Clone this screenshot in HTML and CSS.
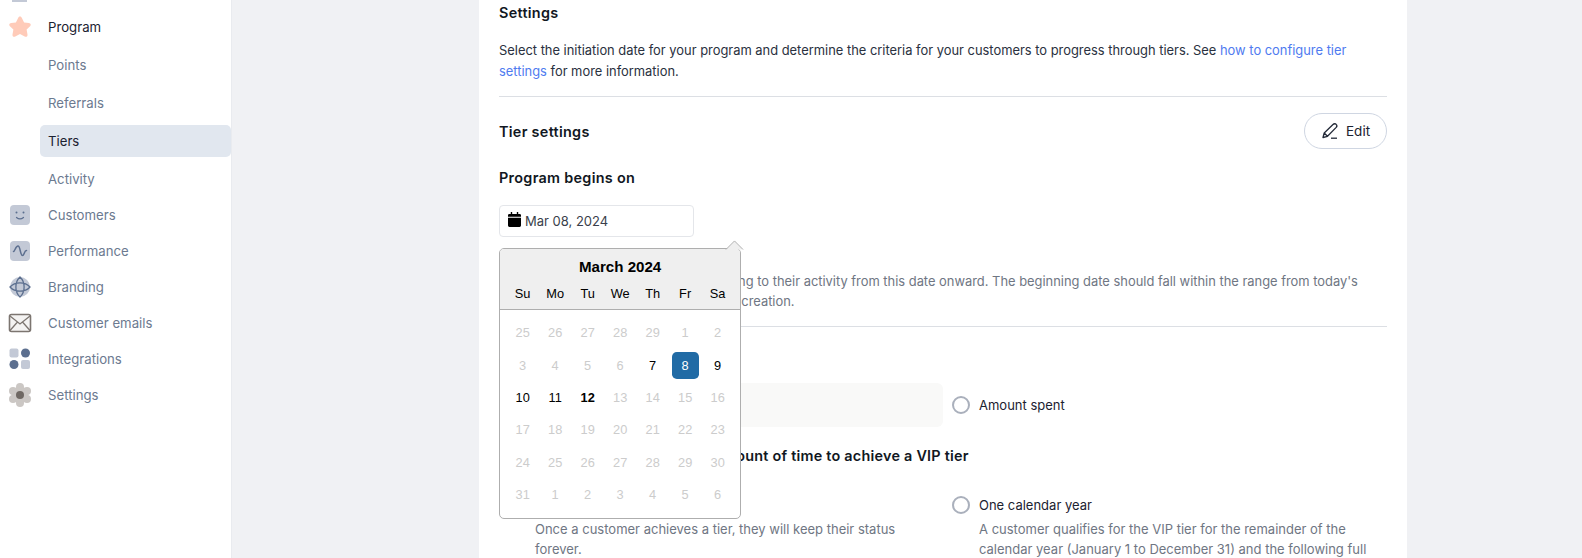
FILE: index.html
```html
<!DOCTYPE html>
<html lang="en">
<head>
<meta charset="utf-8">
<title>Tiers settings</title>
<link rel="stylesheet" href="styles.css">
</head>
<body>
<div class="app">
  <aside class="sidebar">
    <div class="top-sliver"></div>
    <nav class="nav">
      <a class="item main dark"><svg class="ico" viewBox="0 0 24 24"><path d="M12 1.500c1 0 1.500.7 2 1.700l2.100 4.200 4.800.7c2 .3 2.400 1.900 1.200 3.100l-3.500 3.400.9 4.900c.3 1.900-1.200 2.800-2.800 2l-4.700-2.400-4.700 2.400c-1.600.8-3.100-.1-2.800-2l.9-4.900-3.500-3.400C.7 10 1.100 8.400 3.100 8.100l4.800-.7L10 3.200c.5-1 1-1.700 2-1.700z" fill="#ffcbb9"/></svg><span>Program</span></a>
      <a class="item sub">Points</a>
      <a class="item sub">Referrals</a>
      <a class="item sub active">Tiers</a>
      <a class="item sub">Activity</a>
      <a class="item main"><svg class="ico" viewBox="0 0 24 24"><rect x="2" y="2" width="20" height="20" rx="4" fill="#c3c9d6"/><circle cx="8.500" cy="9.500" r="1" fill="#5c6f8f"/><circle cx="15.500" cy="9.500" r="1" fill="#5c6f8f"/><path d="M8.500 14.500c2 1.700 5 1.700 7 0" fill="none" stroke="#5c6f8f" stroke-width="1.200" stroke-linecap="round"/></svg><span>Customers</span></a>
      <a class="item main"><svg class="ico" viewBox="0 0 24 24"><rect x="2" y="2" width="20" height="20" rx="4" fill="#c3c9d6"/><path d="M5.500 12.500C7 12.500 7.500 7 10 7c2.500 0 2 9.500 4.500 9.500 2 0 1.500-5 4-5" fill="none" stroke="#5c6f8f" stroke-width="1.500" stroke-linecap="round"/></svg><span>Performance</span></a>
      <a class="item main"><svg class="ico" viewBox="0 0 24 24"><circle cx="12" cy="12" r="10" fill="#c3c9d6"/><path d="M12 2c5.500 5 5.500 15 0 20-5.500-5-5.500-15 0-20zM2 12c5-5.500 15-5.500 20 0-5 5.500-15 5.500-20 0z" fill="none" stroke="#5c6f8f" stroke-width="1.300"/></svg><span>Branding</span></a>
      <a class="item main"><svg class="ico" viewBox="0 0 24 24"><rect x="1.500" y="3.500" width="21" height="17" rx="2" fill="#f4f3f2" stroke="#7c7570" stroke-width="1.600"/><path d="M2 5l10 8 10-8M2 19.500l7.500-8.500M22 19.500L14.500 11" fill="none" stroke="#7c7570" stroke-width="1.300"/></svg><span>Customer emails</span></a>
      <a class="item main"><svg class="ico" viewBox="0 0 24 24"><rect x="1.500" y="1.500" width="9" height="9" rx="2" fill="#c3c9d6"/><circle cx="17.500" cy="6" r="4.500" fill="#5c6f8f"/><circle cx="6" cy="17.500" r="4.500" fill="#5c6f8f"/><rect x="13" y="13" width="9" height="9" rx="2" fill="#c3c9d6"/></svg><span>Integrations</span></a>
      <a class="item main"><svg class="ico" viewBox="0 0 24 24"><g fill="#cbc7c4"><circle cx="12" cy="12" r="8.500"/><circle cx="12" cy="4" r="4"/><circle cx="12" cy="20" r="4"/><circle cx="19" cy="8" r="4"/><circle cx="19" cy="16" r="4"/><circle cx="5" cy="8" r="4"/><circle cx="5" cy="16" r="4"/></g><circle cx="12" cy="12" r="4" fill="#6f6863"/></svg><span>Settings</span></a>
    </nav>
  </aside>
  <main class="content">
    <section class="card">
      <h2 class="title">Settings</h2>
      <p class="lead">Select the initiation date for your program and determine the criteria for your customers to progress through tiers. See <a class="link">how to configure tier settings</a> for more information.</p>
      <hr class="rule">
      <div class="tier-head">
        <h3 class="title">Tier settings</h3>
        <button class="edit"><svg class="pen" viewBox="0 0 18 18"><path d="M2 15.500l1.200-4.500L12 2.500c1-1 2.400-1 3.200-.1.800.8.800 2.100 0 3l-8.700 8.900-4.500 1.200zM3.200 11l3.300 3.300" fill="none" stroke="#232a38" stroke-width="1.300" stroke-linejoin="round"/><path d="M10 16.200h6" stroke="#232a38" stroke-width="1.300"/></svg>Edit</button>
      </div>
      <h3 class="title begins">Program begins on</h3>
      <div class="date-wrap">
        <div class="date-input"><svg class="cal-ico" viewBox="0 0 14 16"><path d="M3 0h1.500v2h5V0H11v2h1.500A1.500 1.500 0 0 1 14 3.500V5H0V3.500A1.500 1.500 0 0 1 1.500 2H3zM0 6h14v8.500a1.500 1.500 0 0 1-1.500 1.500h-11A1.500 1.500 0 0 1 0 14.500z" fill="#000"/></svg>Mar 08, 2024</div>
        <div class="popup">
          <svg class="arrow" viewBox="0 0 20 10"><path d="M1 10l9-9 9 9" fill="#efefef" stroke="#aeaeae"/></svg>
          <div class="cal-head">
            <div class="month">March 2024</div>
            <div class="names"><span>Su</span><span>Mo</span><span>Tu</span><span>We</span><span>Th</span><span>Fr</span><span>Sa</span></div>
          </div>
          <div class="days">
            <span>25</span><span>26</span><span>27</span><span>28</span><span>29</span><span>1</span><span>2</span>
            <span>3</span><span>4</span><span>5</span><span>6</span><span class="on">7</span><span class="sel">8</span><span class="on">9</span>
            <span class="on">10</span><span class="on">11</span><span class="on today">12</span><span>13</span><span>14</span><span>15</span><span>16</span>
            <span>17</span><span>18</span><span>19</span><span>20</span><span>21</span><span>22</span><span>23</span>
            <span>24</span><span>25</span><span>26</span><span>27</span><span>28</span><span>29</span><span>30</span>
            <span>31</span><span>1</span><span>2</span><span>3</span><span>4</span><span>5</span><span>6</span>
          </div>
        </div>
      </div>
      <p class="help">Customers are placed into tiers according to their activity from this date onward. The beginning date should fall within the range from today's date up to one year after the program's creation.</p>
      <hr class="rule second">
      <h3 class="title">Tier progress is based on</h3>
      <div class="choice-row">
        <div class="choice-box"><span class="radio"></span>Points earned</div>
        <label class="choice"><span class="radio"></span>Amount spent</label>
      </div>
      <h3 class="title window">Customers have just a limited amount of time to achieve a VIP tier</h3>
      <div class="periods">
        <div class="period">
          <div class="choice"><span class="radio"></span>Customers keep their tier forever</div>
          <p class="desc">Once a customer achieves a tier, they will keep their status forever.</p>
        </div>
        <div class="period">
          <div class="choice"><span class="radio"></span>One calendar year</div>
          <p class="desc">A customer qualifies for the VIP tier for the remainder of the calendar year (January 1 to December 31) and the following full calendar year.</p>
        </div>
      </div>
    </section>
  </main>
</div>
</body>
</html>
```

FILE: styles.css
```css
* { box-sizing: border-box; }
html, body { margin: 0; height: 558px; overflow: hidden; }
body { background: #f0f1f4; font-family: Inter, "Noto Sans", sans-serif; font-size: 13px; color: #1c2230; }
.app { display: flex; height: 558px; overflow: hidden; }

.sidebar { width: 232px; flex: none; background: #fff; border-right: 1px solid #e9ebef; }
.top-sliver { width: 15px; height: 2px; margin-left: 12px; background: #c3c9d6; }
.nav { display: flex; flex-direction: column; padding-top: 6px; }
.item { display: flex; align-items: center; height: 36px; color: #6c7a90; font-size: 13.200px; }
.item.dark { color: #1c2230; height: 38px; }
.item.main { padding-left: 8px; gap: 16px; }
.ico { width: 24px; height: 24px; flex: none; }
.item.sub { height: 38px; margin-left: 40px; padding-left: 8px; }
.item.sub + .item.main { margin-top: -1px; }
.item.sub.active { height: 32px; margin-top: 3px; margin-bottom: 3px; background: #e1e7ef; border-radius: 5px; color: #1c2230; }

.content { flex: 1; padding-left: 247px; }
.card { width: 928px; height: 700px; background: #fff; padding: 4px 20px 0; }
.title { margin: 0; font-size: 14.400px; font-weight: 600; line-height: 18px; letter-spacing: .3px; color: #111722; }
.lead { margin: 18px 0 0; font-size: 12.900px; line-height: 21px; color: #2a3140; }
.link { color: #4f7bf0; }
.rule { border: 0; border-top: 1px solid #dcdfe4; margin: 14px 0 0; }
.tier-head { display: flex; justify-content: space-between; align-items: center; margin-top: 16px; }
.tier-head .title { margin-top: 2px; }
.edit { display: flex; align-items: center; gap: 7px; width: 83px; height: 36px; padding: 0 0 0 16px; background: #fff; border: 1px solid #cfd6e2; border-radius: 18px; font: inherit; font-size: 13.500px; color: #1c2230; }
.pen { width: 18px; height: 18px; }
.begins { margin-top: 20px; }

.date-wrap { position: relative; margin-top: 18px; }
.date-input { display: flex; align-items: center; gap: 4px; width: 195px; height: 32px; padding: 0 8px; border: 1px solid #e4e6ea; border-radius: 4px; color: #3a3f4b; }
.cal-ico { width: 13px; height: 15px; margin-top: -3px; }

.popup { position: absolute; left: 0; top: 43px; width: 242.300px; background: #fff; border: 1px solid #aeaeae; border-radius: 5px; font-family: "Liberation Sans", Arial, sans-serif; color: #000; z-index: 2; }
.arrow { position: absolute; right: -4px; top: -9px; width: 19px; height: 9.500px; display: block; }
.cal-head { background: #efefef; border-bottom: 1px solid #aeaeae; border-radius: 4px 4px 0 0; padding-top: 9px; height: 61px; }
.month { text-align: center; font-size: 15.100px; font-weight: 700; line-height: 18px; }
.names, .days { display: grid; grid-template-columns: repeat(7, 32.500px); justify-content: center; }
.names { margin-top: 7px; font-size: 12.800px; text-align: center; line-height: 22px; }
.days { padding: 6.400px; font-size: 12.800px; text-align: center; color: #ccc; }
.days span { height: 27.200px; margin: 2.650px; line-height: 27.200px; border-radius: 4.800px; }
.days .on { color: #000; }
.days .today { font-weight: 700; }
.days .sel { background: #216ba5; color: #fff; }

.help { margin: 35px 0 0; font-size: 12.900px; line-height: 20px; color: #6f7683; }
.rule.second { margin-top: 14px; }
.second + .title { margin-top: 29px; }
.choice-row { display: flex; align-items: center; gap: 9px; margin-top: 9px; }
.choice-box { display: flex; align-items: center; width: 444px; height: 44px; background: #f9f9f8; border-radius: 6px; }
.choice { display: flex; align-items: center; color: #1c2230; }
.radio { width: 18px; height: 18px; flex: none; border: 2px solid #aab0bc; border-radius: 50%; margin-right: 9px; background: #fff; }
.window { margin-top: 20px; letter-spacing: .24px; }
.periods { display: grid; grid-template-columns: 444px 1fr; column-gap: 9px; margin-top: 31px; }
.period { min-width: 0; }
.period .choice { height: 18px; }
.desc { margin: 5px 0 0 36px; line-height: 20px; color: #6f7683; }
.period + .period .desc { margin-left: 27px; }
```
